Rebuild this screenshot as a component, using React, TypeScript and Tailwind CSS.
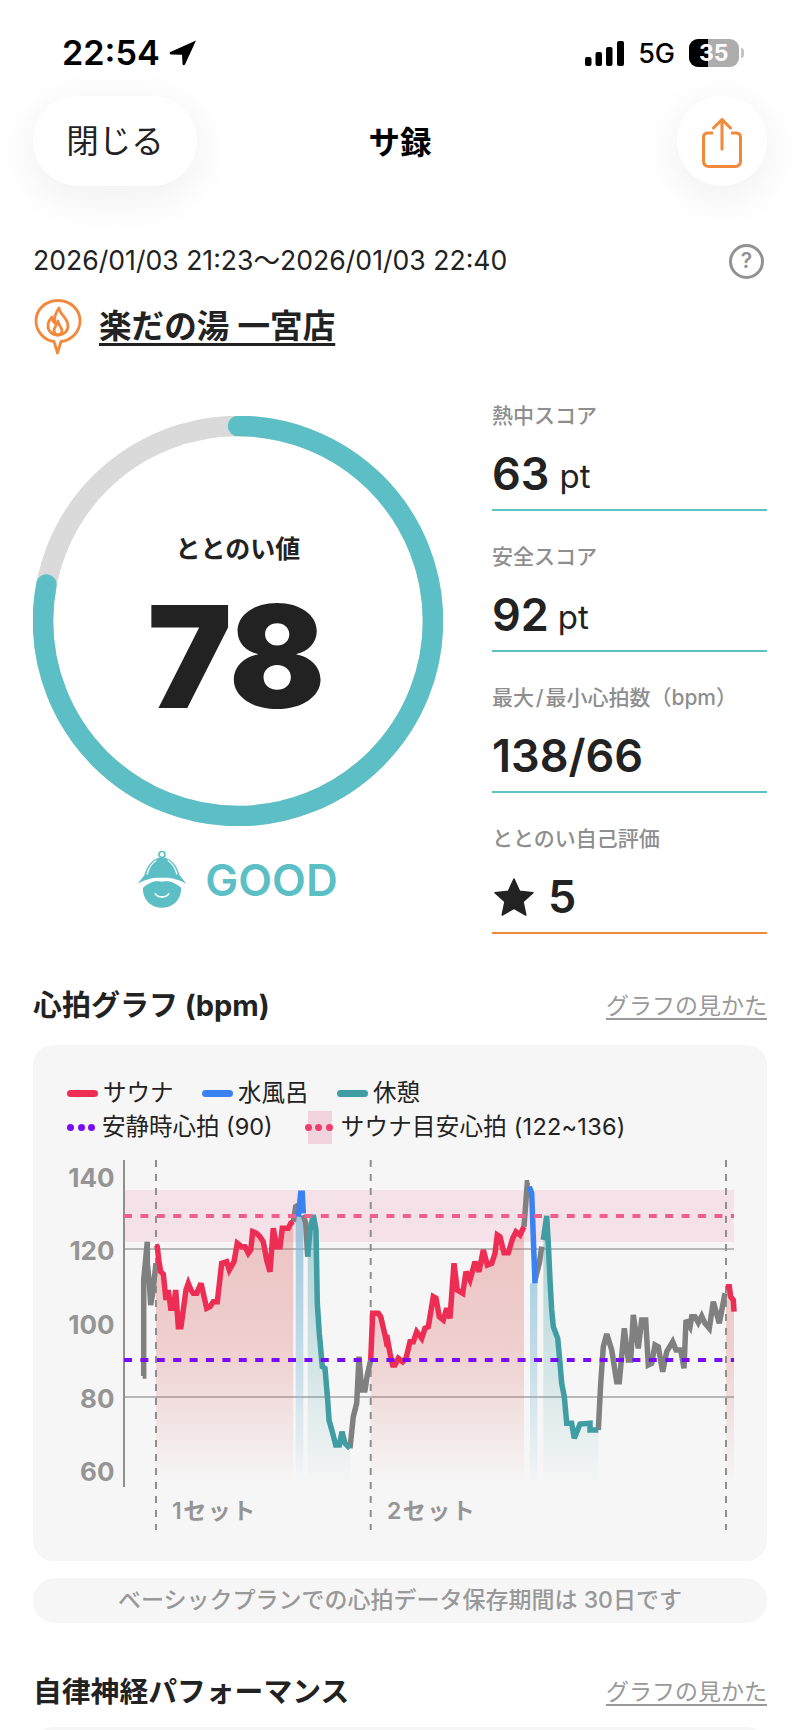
import React from "react";

type P = number[][];
const a = (pts: P): P => pts.map(([x, y]) => [30 + x / 3, 1050 + y / 3]);
const b = (pts: P): P => pts.map(([x, y]) => [380 + x / 3, 1130 + y / 3]);
const s = (pts: P) => pts.map((p) => `${p[0].toFixed(1)},${p[1].toFixed(1)}`).join(" ");
const area = (pts: P) => {
  const first = pts[0];
  const last = pts[pts.length - 1];
  return `${first[0].toFixed(1)},1480 ${s(pts)} ${last[0].toFixed(1)},1480`;
};

const GRAY = "#808080";
const RED = "#ee2d55";
const BLUE = "#3a82f2";
const TEAL = "#3f9da3";

const red1 = a([[378,585],[382,590],[386,630],[392,665],[400,672],[408,750],[415,720],[422,775],[430,775],[437,720],[445,830],[453,830],[468,720],[475,700],[483,720],[490,730],[500,730],[513,700],[520,730],[530,775],[540,770],[550,755],[562,755],[575,640],[590,635],[598,660],[612,635],[622,580],[635,590],[645,590],[655,610],[662,600],[668,545],[680,550],[690,560],[700,575],[710,630],[720,665],[730,535],[740,590],[750,590],[757,535],[775,535],[782,520],[790,515]]);
const red2 = [
  ...a([[1022,930],[1028,790],[1045,790],[1052,800],[1065,855],[1072,890]]),
  ...b([[20,615],[30,670],[38,705],[45,705],[55,685],[68,695],[78,685],[90,635],[100,635],[110,605],[125,625],[135,595],[145,590],[160,500],[168,505],[178,560],[190,570],[200,535],[210,565],[222,400],[232,480],[248,490],[258,425],[270,450],[285,395],[297,425],[310,360],[322,405],[335,400],[345,370],[352,315],[360,320],[372,368],[385,368],[398,325],[408,305],[420,315],[432,290]]),
];
const red3 = b([[1038,470],[1048,470],[1052,500],[1060,510],[1062,545]]);
const blue1 = a([[805,500],[812,430],[817,430],[820,490]]);
const blue2 = b([[448,170],[455,190],[465,460]]);
const teal1 = a([[833,620],[840,540],[850,495],[858,540],[862,760],[868,850],[877,950],[885,955],[893,1050],[897,1110],[908,1150],[917,1185],[928,1185],[936,1145],[945,1180],[960,1195]]);
const teal2 = b([[490,330],[500,258],[505,340],[510,450],[515,540],[520,590],[533,625],[540,700],[545,760],[553,800],[560,880],[575,880],[583,925],[600,882],[630,880],[630,900],[655,900]]);
const grays: P[] = [
  a([[338,978],[341,978],[341,690],[352,575],[352,640],[358,700],[362,765],[368,730],[378,640]]),
  a([[790,515],[797,470],[805,465]]),
  a([[820,495],[827,520],[833,620]]),
  a([[960,1195],[970,1100],[980,1060],[987,920],[995,1020],[1005,1020],[1012,975],[1022,930]]),
  b([[432,290],[442,158],[448,158]]),
  b([[465,450],[478,400],[485,350]]),
  b([[655,900],[662,760],[670,650],[680,612],[695,660],[710,755],[718,755],[733,595],[745,690],[752,690],[760,555],[775,655],[785,570],[797,570],[805,705],[815,700],[825,645],[835,650],[848,725],[860,665],[878,635],[888,660],[902,660],[912,715],[918,570],[930,590],[935,560],[945,560],[955,578],[965,558],[975,580],[988,595],[1000,515],[1018,580],[1035,490]]),
];

function Chart() {
  const Line = ({ pts, c }: { pts: P; c: string }) => (
    <polyline points={s(pts)} fill="none" stroke={c} strokeWidth={5.5} strokeLinejoin="miter" strokeMiterlimit={3} />
  );
  const blueRect1 = a([[797,500],[820,500]]);
  const blueRect2 = b([[450,460],[472,460]]);
  return (
    <svg viewBox="33 1150 734 400" className="block w-[734px] h-[400px] mt-[6px]">
      <defs>
        <linearGradient id="gr" gradientUnits="userSpaceOnUse" x1="0" y1="1260" x2="0" y2="1480">
          <stop offset="0" stopColor="#d9615f" stopOpacity="0.32" />
          <stop offset="0.4" stopColor="#d9615f" stopOpacity="0.26" />
          <stop offset="1" stopColor="#d9615f" stopOpacity="0.01" />
        </linearGradient>
        <linearGradient id="gt" gradientUnits="userSpaceOnUse" x1="0" y1="1240" x2="0" y2="1480">
          <stop offset="0" stopColor="#3f9da3" stopOpacity="0.38" />
          <stop offset="0.45" stopColor="#3f9da3" stopOpacity="0.22" />
          <stop offset="1" stopColor="#3f9da3" stopOpacity="0.01" />
        </linearGradient>
        <linearGradient id="gb" gradientUnits="userSpaceOnUse" x1="0" y1="1240" x2="0" y2="1480">
          <stop offset="0" stopColor="#7fb9d6" stopOpacity="0.7" />
          <stop offset="0.5" stopColor="#7fb9d6" stopOpacity="0.42" />
          <stop offset="1" stopColor="#7fb9d6" stopOpacity="0.02" />
        </linearGradient>
      </defs>
      <rect x="124" y="1190" width="610" height="52" fill="#f5e2e8" />
      <line x1="124" x2="734" y1="1249" y2="1249" stroke="#a3a3a3" strokeWidth="1.5" />
      <line x1="124" x2="734" y1="1397" y2="1397" stroke="#a3a3a3" strokeWidth="1.5" />
      <polygon points={area(red1)} fill="url(#gr)" />
      <polygon points={area(red2)} fill="url(#gr)" />
      <polygon points={area(red3)} fill="url(#gr)" />
      <polygon points={area(teal1)} fill="url(#gt)" />
      <polygon points={area(teal2)} fill="url(#gt)" />
      <rect x={blueRect1[0][0]} y={blueRect1[0][1]} width={blueRect1[1][0] - blueRect1[0][0]} height={1480 - blueRect1[0][1]} fill="url(#gb)" />
      <rect x={blueRect2[0][0]} y={blueRect2[0][1]} width={blueRect2[1][0] - blueRect2[0][0]} height={1480 - blueRect2[0][1]} fill="url(#gb)" />
      <line x1="124" x2="124" y1="1160" y2="1487" stroke="#8f8f8f" strokeWidth="2" />
      {[156, 370.7, 726].map((x) => (
        <line key={x} x1={x} x2={x} y1="1160" y2="1530" stroke="#8f8f8f" strokeWidth="2" strokeDasharray="7 7" />
      ))}
      {grays.map((g, i) => (
        <Line key={i} pts={g} c={GRAY} />
      ))}
      <Line pts={red1} c={RED} />
      <Line pts={red2} c={RED} />
      <Line pts={red3} c={RED} />
      <Line pts={teal1} c={TEAL} />
      <Line pts={teal2} c={TEAL} />
      <Line pts={blue1} c={BLUE} />
      <Line pts={blue2} c={BLUE} />
      <line x1="124" x2="734" y1="1216" y2="1216" stroke="#ee5f8b" strokeWidth="4" strokeDasharray="8 8.4" />
      <line x1="124" x2="734" y1="1360" y2="1360" stroke="#7a0cf5" strokeWidth="4" strokeDasharray="8 8.4" />
      {[[140, 1177], [120, 1250], [100, 1324], [80, 1398], [60, 1471]].map(([v, y]) => (
        <text key={v} x="114.5" y={y + 9.5} textAnchor="end" fill="#959595" fontSize="26" fontWeight="700">
          {v}
        </text>
      ))}
      <text x="172" y="1519" fill="#959595" fontSize="23" fontWeight="600" letterSpacing="1.5">1セット</text>
      <text x="387" y="1519" fill="#959595" fontSize="23" fontWeight="600" letterSpacing="1.5">2セット</text>
    </svg>
  );
}

function Stat({ label, children, line = "border-[#5cc2c4]" }: { label: string; children: React.ReactNode; line?: string }) {
  return (
    <div className={`h-[141px] flex flex-col justify-end border-b-2 pb-[10px] ${line}`}>
      <div className="h-[30px] leading-[30px] text-[21px] font-medium text-[#8e8e8e] whitespace-nowrap">{label}</div>
      <div className="mt-[18px] h-[50px] flex items-center text-[#222]">{children}</div>
    </div>
  );
}

function Legend({ color, label }: { color: string; label: string }) {
  return (
    <div className="flex items-center gap-[5px]">
      <span className={`block w-[31px] h-[7px] rounded-full ${color}`} />
      <span className="w-[70px] whitespace-nowrap">{label}</span>
    </div>
  );
}

function Dots({ color }: { color: string }) {
  return (
    <span className="flex gap-[3.5px] w-[28px]">
      <span className={`block w-[7px] h-[7px] rounded-full ${color}`} />
      <span className={`block w-[7px] h-[7px] rounded-full ${color}`} />
      <span className={`block w-[7px] h-[7px] rounded-full ${color}`} />
    </span>
  );
}

export default function App() {
  return (
    <div className="relative w-[800px] h-[1730px] overflow-hidden bg-white text-[#222] font-['Inter','Noto_Sans_CJK_JP',sans-serif]">
      {/* status bar */}
      <div className="h-[96px] pl-[62px] pr-[56px] pt-[34px] flex justify-between items-start text-black">
        <div className="flex items-center gap-[9px] h-[38px]">
          <span className="text-[34.2px] font-semibold leading-none">22:54</span>
          <svg width="28" height="26" viewBox="0 0 28 26">
            <path d="M27 0.5 L0.8 12.3 Q0 14 2 14.5 L13 14.8 L13.6 24.5 Q14.6 26 16 24.6 Z" fill="#000" />
          </svg>
        </div>
        <div className="flex items-center h-[38px]">
          <svg width="39" height="25" viewBox="0 0 39 25" className="mr-[14px]">
            <rect x="0" y="16" width="6.5" height="9" rx="2" />
            <rect x="10.5" y="11" width="6.5" height="14" rx="2" />
            <rect x="21" y="6" width="6.5" height="19" rx="2" />
            <rect x="32" y="0" width="7" height="25" rx="2" />
          </svg>
          <span className="text-[27px] font-medium leading-none mr-[14px]">5G</span>
          <div className="relative w-[50px] h-[28px] rounded-[9px] overflow-hidden bg-[#adadad] flex">
            <span className="block w-[19px] h-full bg-black" />
            <span className="absolute inset-0 pl-[10px] text-white text-[23px] font-bold leading-[28px]">35</span>
          </div>
          <span className="block w-[3px] h-[10px] ml-[2px] rounded-r-full bg-[#c4c4c4]" />
        </div>
      </div>

      {/* nav */}
      <div className="relative h-[90px] px-[33px] flex justify-between items-center">
        <button className="w-[164px] h-[90px] pt-[3px] rounded-[45px] bg-white shadow-[0_10px_45px_rgba(0,0,0,0.07)] text-[32.5px] text-[#222]">閉じる</button>
        <div className="absolute left-0 right-0 pt-[3px] text-center text-[31.5px] font-bold text-black pointer-events-none">サ録</div>
        <button className="w-[90px] h-[90px] pt-[4px] rounded-full bg-white shadow-[0_10px_45px_rgba(0,0,0,0.07)] flex items-center justify-center">
          <svg width="40" height="50" viewBox="0 0 40 50" fill="none" stroke="#f2883a" strokeWidth="3">
            <path d="M11 15 H6 Q1.5 15 1.5 19.5 V43 Q1.5 48.5 7 48.5 H33 Q38.5 48.5 38.5 43 V19.5 Q38.5 15 34 15 H29" />
            <path d="M20 31 V2 M11.5 10 L20 1.5 L28.5 10" strokeLinecap="round" strokeLinejoin="round" />
          </svg>
        </button>
      </div>

      {/* date */}
      <div className="mt-[55px] px-[33px] h-[40px] flex items-center justify-between text-[26.6px] text-[#222]">
        <span className="whitespace-nowrap">2026/01/03 21:23～2026/01/03 22:40</span>
        <span className="w-[35px] h-[35px] mr-[3px] rounded-full border-[3px] border-[#929292] flex items-center justify-center text-[21px] font-semibold text-[#929292]">?</span>
      </div>

      {/* venue */}
      <div className="mt-[18px] px-[34px] h-[55px] flex items-center gap-[17px]">
        <svg width="48" height="56" viewBox="0 0 48 56" fill="none" stroke="#f2883a" strokeWidth="2.8">
          <path d="M24 1.5 C11 1.5 2 11 2 22 C2 33 11 41.5 20 42.5 L23.5 54 L27 42.5 C37 41.5 46 33 46 22 C46 11 37 1.5 24 1.5 Z" strokeLinejoin="round" />
          <path d="M25 9 C26 16 34 19 34 27 C34 33 29 36 24 36 C18 36 14 32 14 27 C14 23 16 20 18 18 C18 21 19 23 21 24 C20 19 22 13 25 9 Z" strokeLinejoin="round" />
          <path d="M24 22 C24 26 28.5 29 28 32 C27.5 34.5 26 36 24 36 C22 36 20.5 34.5 20 32 C19.5 29 23 26 24 22 Z" strokeLinejoin="round" />
        </svg>
        <span className="text-[32.6px] font-semibold underline decoration-[3px] underline-offset-[5px] whitespace-nowrap">楽だの湯 一宮店</span>
      </div>

      {/* score */}
      <div className="mt-[16px] pl-[33px] pr-[33px] flex justify-between">
        <div className="w-[410px] pt-[46px]">
          <div className="relative w-[410px] h-[410px]">
            <svg viewBox="0 0 410 410" className="block w-[410px] h-[410px]">
              <circle cx="205" cy="205" r="195" fill="none" stroke="#dadada" strokeWidth="20.5" />
              <circle
                cx="205"
                cy="205"
                r="195"
                fill="none"
                stroke="#5dbfc6"
                strokeWidth="20.5"
                strokeLinecap="round"
                pathLength={100}
                strokeDasharray="78 100"
                transform="rotate(-90 205 205)"
              />
            </svg>
            <div className="absolute inset-0 flex flex-col items-center">
              <div className="mt-[113px] h-[40px] leading-[40px] text-[25px] font-semibold">ととのい値</div>
              <div className="mt-[2px] pr-[4px] text-[142px] font-black leading-[170px] tracking-[-1px]">78</div>
            </div>
          </div>
          <div className="mt-[25px] flex items-center justify-center gap-[18px] pr-[1px]">
            <svg width="50" height="57" viewBox="0 0 150 170">
              <circle cx="75" cy="10" r="9" fill="none" stroke="#5dbfc6" strokeWidth="5" />
              <path d="M75 18 C48 20 30 42 22 72 L2 98 C30 82 52 78 75 80 C98 78 120 82 148 98 L128 72 C120 42 102 20 75 18 Z" fill="#5dbfc6" />
              <path d="M30 70 C35 50 45 35 58 28" fill="none" stroke="#fff" strokeWidth="4" />
              <path d="M120 70 C115 50 105 35 92 28" fill="none" stroke="#fff" strokeWidth="4" />
              <path d="M18 110 C40 92 55 88 75 92 C95 88 110 92 132 110 C134 145 108 170 75 170 C42 170 16 145 18 110 Z" fill="#5dbfc6" />
              <path d="M55 128 C62 140 88 140 95 128" fill="none" stroke="#fff" strokeWidth="5" strokeLinecap="round" />
            </svg>
            <span className="text-[44px] font-semibold text-[#5dbfc6] leading-none">GOOD</span>
          </div>
        </div>

        <div className="w-[275px]">
          <Stat label="熱中スコア">
            <span className="text-[45px] font-semibold">63</span>
            <span className="ml-[10px] text-[33px] mt-[5px]">pt</span>
          </Stat>
          <Stat label="安全スコア">
            <span className="text-[45px] font-semibold">92</span>
            <span className="ml-[9px] text-[33px] mt-[5px]">pt</span>
          </Stat>
          <Stat label={"最大\u200A/\u200A最小心拍数（bpm）"}>
            <span className="text-[45px] font-semibold">138/66</span>
          </Stat>
          <Stat label="ととのい自己評価" line="border-[#f2883a]">
            <svg width="40" height="38" viewBox="0 0 40 38" className="ml-[2px]">
              <path d="M20 1 L25.6 13.2 L39 14.7 L29 23.7 L31.8 37 L20 30.3 L8.2 37 L11 23.7 L1 14.7 L14.4 13.2 Z" fill="#222" strokeLinejoin="round" stroke="#222" strokeWidth="1.5" />
            </svg>
            <span className="ml-[14px] text-[45px] font-semibold">5</span>
          </Stat>
        </div>
      </div>

      {/* heart rate */}
      <div className="mt-[52px] px-[33px] h-[40px] flex items-center justify-between">
        <span className="text-[29px] font-bold">心拍グラフ (bpm)</span>
        <span className="text-[23px] text-[#999] underline underline-offset-[4px]">グラフの見かた</span>
      </div>
      <div className="mt-[19px] mx-[33px] rounded-[20px] bg-[#f6f6f6] pt-[31px] pb-[11px]">
        <div className="pl-[34px] text-[23.5px] text-[#222] leading-[34px]">
          <div className="h-[34px] flex items-center gap-[29px]">
            <Legend color="bg-[#ee2d55]" label="サウナ" />
            <Legend color="bg-[#3a82f2]" label="水風呂" />
            <Legend color="bg-[#3f9da3]" label="休憩" />
          </div>
          <div className="h-[34px] flex items-center">
            <Dots color="bg-[#7a0cf5]" />
            <span className="ml-[7px] whitespace-nowrap">安静時心拍 (90)</span>
            <span className="relative ml-[32px] w-[28px] h-[33px] flex items-center justify-center">
              <span className="absolute left-[3px] top-0 w-[24px] h-[33px] bg-[#f0d3dc]" />
              <span className="relative"><Dots color="bg-[#ee3d6d]" /></span>
            </span>
            <span className="ml-[8px] whitespace-nowrap tracking-[0.25px]">サウナ目安心拍 (122~136)</span>
          </div>
        </div>
        <Chart />
      </div>

      {/* note */}
      <div className="mt-[17px] mx-[33px] h-[45px] rounded-[22px] bg-[#f6f6f6] flex items-center justify-center text-[23px] font-medium text-[#999]">
        ベーシックプランでの心拍データ保存期間は 30日です
      </div>

      {/* autonomic */}
      <div className="mt-[49px] px-[33px] h-[40px] flex items-center justify-between">
        <span className="text-[28.8px] font-bold">自律神経パフォーマンス</span>
        <span className="text-[23px] text-[#999] underline underline-offset-[4px]">グラフの見かた</span>
      </div>
      <div className="mt-[15px] mx-[33px] h-[100px] rounded-[20px] bg-[#f6f6f6]" />
    </div>
  );
}
